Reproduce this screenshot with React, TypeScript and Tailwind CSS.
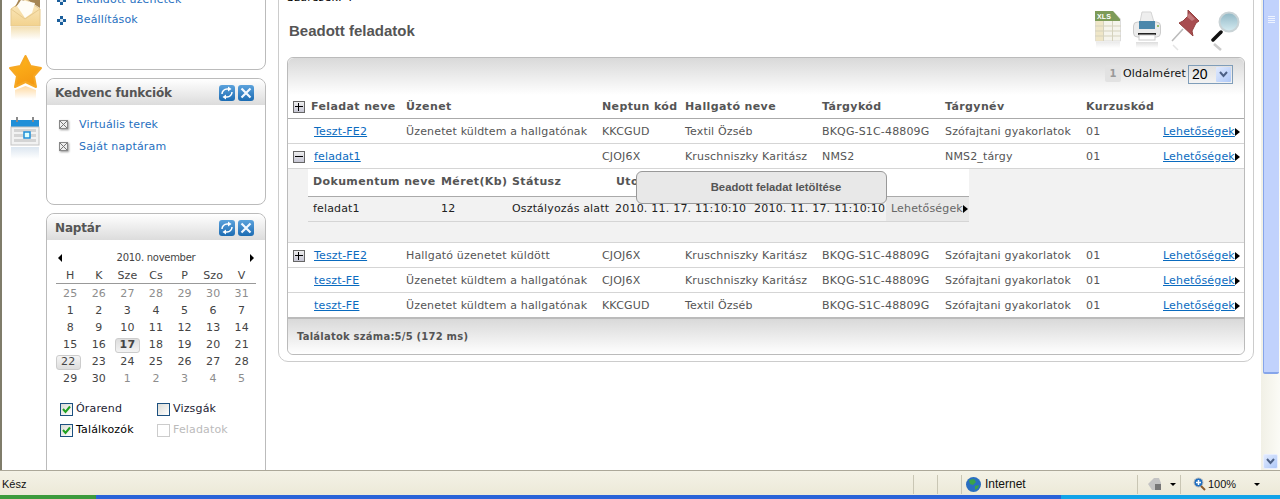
import type { ReactNode } from 'react'

const GRID = 'grid grid-cols-[23px_95px_196px_83px_137px_123px_141px_77px_83px] items-center'
const SUB_GRID = 'grid grid-cols-[128px_71px_104px_139px_131px_83px] items-center'

const rows = [
  { name: 'Teszt-FE2', msg: 'Üzenetet küldtem a hallgatónak', code: 'KKCGUD', student: 'Textil Özséb', subj: 'BKQG-S1C-48809G', subjName: 'Szófajtani gyakorlatok' },
  { name: 'feladat1', msg: '', code: 'CJOJ6X', student: 'Kruschniszky Karitász', subj: 'NMS2', subjName: 'NMS2_tárgy', toggle: 'minus' },
  { name: 'Teszt-FE2', msg: 'Hallgató üzenetet küldött', code: 'CJOJ6X', student: 'Kruschniszky Karitász', subj: 'BKQG-S1C-48809G', subjName: 'Szófajtani gyakorlatok', toggle: 'plus' },
  { name: 'teszt-FE', msg: 'Üzenetet küldtem a hallgatónak', code: 'CJOJ6X', student: 'Kruschniszky Karitász', subj: 'BKQG-S1C-48809G', subjName: 'Szófajtani gyakorlatok' },
  { name: 'teszt-FE', msg: 'Üzenetet küldtem a hallgatónak', code: 'KKCGUD', student: 'Textil Özséb', subj: 'BKQG-S1C-48809G', subjName: 'Szófajtani gyakorlatok' },
]

const weeks = [
  ['25', '26', '27', '28', '29', '30', '31'],
  ['1', '2', '3', '4', '5', '6', '7'],
  ['8', '9', '10', '11', '12', '13', '14'],
  ['15', '16', '17', '18', '19', '20', '21'],
  ['22', '23', '24', '25', '26', '27', '28'],
  ['29', '30', '1', '2', '3', '4', '5'],
]

function Toggle({ kind, className = '' }: { kind: 'plus' | 'minus'; className?: string }) {
  return (
    <span className={`relative ml-[5px] block h-[12px] w-[12px] border border-[#666] bg-gradient-to-b from-[#eee] to-[#c6c6d4] ${className}`}>
      <span className="absolute left-[1px] top-[4px] h-px w-[8px] bg-black" />
      {kind === 'plus' && <span className="absolute left-[4px] top-[1px] h-[8px] w-px bg-black" />}
    </span>
  )
}

function Arrow() {
  return <span className="absolute right-[-5px] top-[4px] h-0 w-0 border-y-[4px] border-l-[5px] border-y-transparent border-l-black" />
}

function Chevron() {
  return <svg width="9" height="7" viewBox="0 0 9 7"><path d="M1 1 L4.5 5 L8 1" stroke="#4d6185" strokeWidth="2" fill="none" /></svg>
}

function HeaderButtons() {
  return (
    <div className="flex gap-[3px]">
      <span className="flex h-[16px] w-[16px] items-center justify-center rounded-[3px] bg-gradient-to-b from-[#5ba2dc] to-[#1a6cb3]">
        <svg width="14" height="14" viewBox="0 0 14 14">
          <path d="M2 8 A5 5 0 0 1 7 3 L8 3" stroke="#fff" strokeWidth="1.5" fill="none" />
          <path d="M8 0.5 L11.5 3 L8 5.5 Z" fill="#fff" />
          <path d="M12 6 A5 5 0 0 1 7 11 L6 11" stroke="#fff" strokeWidth="1.5" fill="none" />
          <path d="M6 8.5 L2.5 11 L6 13.5 Z" fill="#fff" />
        </svg>
      </span>
      <span className="flex h-[16px] w-[16px] items-center justify-center rounded-[3px] bg-gradient-to-b from-[#5ba2dc] to-[#1a6cb3]">
        <svg width="12" height="12" viewBox="0 0 12 12"><path d="M1.5 1.5 L10.5 10.5 M10.5 1.5 L1.5 10.5" stroke="#f2f8ff" strokeWidth="2.2" /></svg>
      </span>
    </div>
  )
}

function SidePanel({ title, className, children }: { title: string; className: string; children: ReactNode }) {
  return (
    <div className={`rounded-[8px] border border-[#bbb] ${className}`}>
      <div className="flex h-[26px] items-center justify-between rounded-t-[8px] bg-gradient-to-b from-white to-[#dcdcdc] pl-[8px] pr-[11px] pt-[1px]">
        <span className="text-[12px] font-bold tracking-[-0.15px] text-[#555]">{title}</span>
        <HeaderButtons />
      </div>
      {children}
    </div>
  )
}

function Diamond() {
  return (
    <svg width="9" height="9" viewBox="0 0 9 9" shapeRendering="crispEdges">
      <path d="M3 0 H6 V3 H3 Z M0 3 H3 V6 H0 Z M6 3 H9 V6 H6 Z M3 6 H6 V9 H3 Z" fill="#1b5f9c" />
      <path d="M3 3 H6 V6 H3 Z" fill="#cfe0ef" />
    </svg>
  )
}

function FavLink({ label }: { label: string }) {
  return (
    <div className="flex h-[22px] items-center">
      <span className="relative ml-[12px] mt-[-2px] block h-[9px] w-[9px] border border-[#888] bg-[#eee] shadow-[1px_1px_2px_#999]">
        <svg className="absolute inset-0" width="7" height="7" viewBox="0 0 7 7"><path d="M0 0 L7 7 M7 0 L0 7" stroke="#777" strokeWidth="1" /></svg>
      </span>
      <span className="ml-[11px] text-[11px] text-[#1f6fc0]">{label}</span>
    </div>
  )
}

function CheckItem({ label, checked, dim, bold }: { label: string; checked?: boolean; dim?: boolean; bold?: boolean }) {
  return (
    <div className="flex h-[21px] items-center gap-[3px]">
      <span className={`relative block h-[13px] w-[13px] border ${dim ? 'border-[#ccc] bg-white' : 'border-[#1c5180] bg-gradient-to-br from-[#dcdcd6] to-white'}`}>
        {checked && (
          <svg className="absolute inset-0" width="11" height="11" viewBox="0 0 11 11"><path d="M2 5 L4.5 8 L9 2.5" stroke="#21a121" strokeWidth="2" fill="none" /></svg>
        )}
      </span>
      <span className={`text-[11px] ${dim ? 'text-[#bbb]' : bold ? 'text-black' : 'text-[#223]'}`}>{label}</span>
    </div>
  )
}

function Calendar() {
  return (
    <div className="px-[9px] pt-[10px]">
      <div className="flex items-center justify-between px-[2px] text-[10px] tracking-[-0.28px] text-[#444]">
        <span className="h-0 w-0 border-y-[4px] border-r-[4px] border-y-transparent border-r-black" />
        <span>2010. november</span>
        <span className="h-0 w-0 border-y-[4px] border-l-[4px] border-y-transparent border-l-black" />
      </div>
      <div className="grid h-[19px] grid-cols-7 items-center border-b border-[#999] pt-[3px] text-center text-[11px] text-[#444]">
        {['H', 'K', 'Sze', 'Cs', 'P', 'Szo', 'V'].map((d) => (
          <span key={d}>{d}</span>
        ))}
      </div>
      <div className="grid grid-cols-7 pt-[2px] text-center text-[11px]">
        {weeks.flat().map((d, i) => {
          const other = i < 7 || i > 36
          const today = i === 23
          const picked = i === 28
          return (
            <span
              key={i}
              className={`flex items-center justify-center ${today || picked ? 'my-[1px] h-[15px] rounded-[3px] border border-[#ccc]' : 'h-[17px]'} ${other ? 'text-[#8d8d8d]' : 'text-[#444]'} ${today ? 'mx-[2px] bg-gradient-to-b from-[#ddd] to-[#f3f3f3] font-bold text-[#222]' : ''} ${picked ? 'mr-[4px] bg-gradient-to-b from-[#f5f5f5] to-[#ddd]' : ''}`}
            >
              {d}
            </span>
          )
        })}
      </div>
      <div className="mt-[11px] grid grid-cols-[97px_1fr] pl-[4px]">
        <CheckItem label="Órarend" checked />
        <CheckItem label="Vizsgák" />
        <CheckItem label="Találkozók" checked bold />
        <CheckItem label="Feladatok" dim />
      </div>
    </div>
  )
}

function Rail() {
  return (
    <div className="w-[44px] shrink-0 pl-[8px]">
      {/* boríték */}
      <svg className="mt-[-1px] block" width="34" height="42" viewBox="0 0 34 42">
        <defs>
          <linearGradient id="env" x1="0" y1="0" x2="0" y2="1"><stop offset="0" stopColor="#fcecc6" /><stop offset="1" stopColor="#f2d28e" /></linearGradient>
          <linearGradient id="envr" x1="0" y1="0" x2="0" y2="1"><stop offset="0" stopColor="#f3e0b4" /><stop offset="1" stopColor="#fff" /></linearGradient>
        </defs>
        <path d="M1 10 L15 0 L30 10 L30 27 L1 27 Z" fill="url(#env)" stroke="#e6c98d" />
        <path d="M5 8 L9 0 L30 0 L30 9 L16 0 Z" fill="#a58553" />
        <path d="M7 7 L11 1 L25 4 L22 14 L15 19 Z" fill="#fffdf6" />
        <path d="M1 10 L15 20 L30 10" fill="none" stroke="#e6c98d" />
        <rect x="1" y="28" width="29" height="13" fill="url(#envr)" />
      </svg>
      {/* csillag */}
      <svg className="ml-[-2px] mt-[13px] block" width="36" height="46" viewBox="0 0 36 46">
        <defs>
          <linearGradient id="star" x1="0" y1="0" x2="0.4" y2="1"><stop offset="0" stopColor="#ffb81c" /><stop offset="1" stopColor="#f59a12" /></linearGradient>
          <linearGradient id="starr" x1="0" y1="0" x2="0" y2="1"><stop offset="0" stopColor="#ffd9a0" /><stop offset="1" stopColor="#fff" /></linearGradient>
        </defs>
        <path d="M17.5 2 L22.5 12 L33 14 L26 22 L28 33 L17.5 28 L7 33 L9 22 L2 14 L12.5 12 Z" fill="url(#star)" stroke="#f7a823" strokeWidth="2" strokeLinejoin="round" />
        <path d="M7 36 L17.5 32 L28 36 L28 45 L7 45 Z" fill="url(#starr)" />
      </svg>
      {/* naptár */}
      <svg className="mt-[17px] block" width="32" height="44" viewBox="0 0 32 44">
        <defs><linearGradient id="calr" x1="0" y1="0" x2="0" y2="1"><stop offset="0" stopColor="#dce6f0" /><stop offset="1" stopColor="#fff" /></linearGradient></defs>
        <rect x="1" y="3" width="28" height="7" fill="#1f8fd8" />
        <rect x="1" y="10" width="28" height="18" fill="#f2f2f2" stroke="#c4c4c4" />
        <rect x="6" y="0" width="2" height="5" fill="#8a8a8a" />
        <rect x="22" y="0" width="2" height="5" fill="#8a8a8a" />
        <g fill="#d4d4d4">
          <rect x="4" y="12" width="22" height="3" /><rect x="4" y="17" width="22" height="3" /><rect x="4" y="22" width="22" height="3" />
        </g>
        <rect x="14" y="15" width="6" height="6" fill="#dff" stroke="#1f8fd8" strokeWidth="1.5" />
        <rect x="1" y="30" width="28" height="12" fill="url(#calr)" />
      </svg>
    </div>
  )
}

function TopIcons() {
  return (
    <div className="flex items-start pr-[5px]">
      <svg width="26" height="38" viewBox="0 0 26 38">
        <defs><linearGradient id="fade" x1="0" y1="0" x2="0" y2="1"><stop offset="0" stopColor="#ddd" /><stop offset="1" stopColor="#fff" /></linearGradient></defs>
        <path d="M0.5 0.5 L18 0.5 L25.5 8 L25.5 30 L0.5 30 Z" fill="#f5f4ec" stroke="#ddd" />
        <path d="M0 0 L18 0 L25 8 L25 10 L0 10 Z" fill="#7d9b58" />
        <text x="2" y="8" fontSize="7" fontWeight="700" fill="#fff" fontFamily="Liberation Sans, sans-serif">XLS</text>
        <rect x="0.5" y="10" width="8" height="20" fill="#ecdfb8" opacity="0.7" />
        <path d="M0 15 H26 M0 20 H26 M0 25 H26 M8.5 10 V30 M17.5 10 V30" stroke="#d5d2bd" />
        <rect x="1" y="31" width="24" height="6" fill="url(#fade)" opacity="0.6" />
      </svg>
      <svg className="ml-[12px]" width="28" height="38" viewBox="0 0 28 38">
        <path d="M9 1 L18 1 L21 11 L7 11 Z" fill="#eee" stroke="#d5d5d5" />
        <rect x="0.5" y="11" width="27" height="15" rx="4" fill="#ececec" stroke="#ccc" />
        <rect x="6" y="10" width="16" height="8" fill="#4b87ab" />
        <rect x="5" y="22" width="18" height="2" fill="#222" />
        <rect x="6" y="24" width="16" height="5" fill="#fff" stroke="#ccc" />
        <rect x="24" y="14" width="2" height="2" fill="#9bbf6a" />
        <rect x="3" y="31" width="22" height="6" fill="url(#fade)" />
      </svg>
      <svg className="ml-[10px] mt-[-2px]" width="30" height="42" viewBox="0 0 30 42">
        <path d="M1 32 L12 20" stroke="#bbb" strokeWidth="1.6" />
        <path d="M17 1 L28 12 L25 14 L21 22 L22 27 L8 14 L12 12 L17 7 Z" fill="#a84d50" stroke="#93403f" strokeLinejoin="round" />
        <path d="M18 4 L24 10 L21 12 L16 8 Z" fill="#c47a7c" />
        <path d="M2 36 L7 41" stroke="#e4e4e4" strokeWidth="1.5" />
      </svg>
      <svg className="ml-[10px]" width="29" height="40" viewBox="0 0 29 40">
        <defs><linearGradient id="lens" x1="0" y1="0" x2="0" y2="1"><stop offset="0" stopColor="#8fb6c4" /><stop offset="1" stopColor="#d6ecf2" /></linearGradient></defs>
        <path d="M2 29 L10 21" stroke="#111" strokeWidth="3.5" strokeLinecap="round" />
        <circle cx="18" cy="11" r="9.5" fill="url(#lens)" stroke="#c9d3d6" strokeWidth="2" />
        <path d="M3 33 L10 39" stroke="#ccc" strokeWidth="2.5" />
      </svg>
    </div>
  )
}

function Row({ r, last }: { r: (typeof rows)[number]; last?: boolean }) {
  return (
    <div className={`${GRID} ${last ? 'h-[24px]' : 'h-[25px] border-b border-[#d5d5d5]'} pt-[2px] text-[#555]`}>
      <span>{r.toggle && <Toggle kind={r.toggle as 'plus' | 'minus'} />}</span>
      <a className="pl-[3px] text-[#0a6bbf] underline">{r.name}</a>
      <span>{r.msg}</span>
      <span>{r.code}</span>
      <span>{r.student}</span>
      <span>{r.subj}</span>
      <span>{r.subjName}</span>
      <span>01</span>
      <span className="relative w-fit whitespace-nowrap text-[#0a6bbf] underline">
        Lehetőségek
        <Arrow />
      </span>
    </div>
  )
}

export default function App() {
  return (
    <div className="flex h-[499px] w-[1280px] flex-col overflow-hidden bg-white font-['DejaVu_Sans',sans-serif] text-[11px] tracking-[0.16px]">
      <div className="flex h-[470px] shrink-0 overflow-hidden border-l-2 border-[#7f7c6a]">
        <Rail />

        {/* oldalsáv */}
        <div className="mt-[-60px] w-[220px] shrink-0">
          <div className="h-[130px] rounded-[8px] border border-[#bbb] pl-[10px] pt-[49px] text-[11px] text-[#1f6fc0]">
            <div className="flex h-[20px] items-center gap-[10px]"><Diamond /><span>Elküldött üzenetek</span></div>
            <div className="flex h-[20px] items-center gap-[10px]"><Diamond /><span>Beállítások</span></div>
          </div>
          <SidePanel title="Kedvenc funkciók" className="mt-[8px] h-[127px]">
            <div className="pt-[9px]">
              <FavLink label="Virtuális terek" />
              <FavLink label="Saját naptáram" />
            </div>
          </SidePanel>
          <SidePanel title="Naptár" className="mt-[8px] h-[320px]">
            <Calendar />
          </SidePanel>
        </div>

        {/* tartalom */}
        <div className="ml-[12px] mt-[-30px] h-[392px] w-[976px] shrink-0 rounded-[10px] border border-[#ccc] px-[8px]">
          <div className="flex h-[86px] items-start justify-between">
            <div className="pt-[20px]">
              <div className="text-[11px] leading-[14px] text-black">Szűrések: 4</div>
              <div className="mt-[15px] pl-[2px] font-['Liberation_Sans',sans-serif] text-[15px] font-bold tracking-normal text-[#555]">Beadott feladatok</div>
            </div>
            <div className="pt-[40px]"><TopIcons /></div>
          </div>

          <div className="h-[298px] w-[958px] rounded-[6px] border border-[#bbb]">
            <div className="flex h-[37px] items-start justify-end rounded-t-[6px] bg-gradient-to-b from-[#d9d9d9] to-white pr-[11px] pt-[7px]">
              <span className="mr-[2px] flex h-[17px] w-[16px] items-center justify-center rounded-[2px] bg-[#e2e2e2] text-[10px] font-bold text-[#999]">1</span>
              <span className="mt-[1px] text-[#111]">Oldalméret</span>
              <span className="ml-[2px] flex h-[19px] w-[45px] items-center justify-between border border-[#7f9db9] pl-[3px] pr-[1px] font-['Liberation_Sans',sans-serif] text-[14px] tracking-normal text-black">
                20
                <span className="flex h-[15px] w-[15px] items-center justify-center rounded-[1px] bg-gradient-to-br from-[#e1eafe] to-[#aec8f7]">
                  <Chevron />
                </span>
              </span>
            </div>

            <div className={`${GRID} h-[24px] border-b border-[#aaa] pt-[2px] font-bold tracking-[0.38px] text-[#555]`}>
              <Toggle kind="plus" className="mt-[-2px]" />
              <span>Feladat neve</span><span>Üzenet</span><span>Neptun kód</span><span>Hallgató neve</span><span>Tárgykód</span><span>Tárgynév</span><span>Kurzuskód</span><span />
            </div>

            <Row r={rows[0]} />
            <Row r={rows[1]} />

            {/* részletek */}
            <div className="relative h-[74px] border-b border-[#d5d5d5] bg-[#f2f2f2] pl-[20px]">
              <div className="w-[661px]">
                <div className={`${SUB_GRID} h-[28px] border-b border-[#aaa] bg-white pl-[5px] font-bold tracking-[0.38px] text-[#555]`}>
                  <span className="whitespace-nowrap">Dokumentum neve</span><span>Méret(Kb)</span><span>Státusz</span><span className="whitespace-nowrap">Utolsó módosítás</span><span /><span />
                </div>
                <div className={`${SUB_GRID} h-[25px] border-b border-[#d5d5d5] pl-[5px] text-[#222]`}>
                  <span>feladat1</span><span>12</span><span className="whitespace-nowrap">Osztályozás alatt</span><span className="ml-[-1px] whitespace-nowrap tracking-[0.22px]">2010. 11. 17. 11:10:10</span><span className="ml-[-1px] whitespace-nowrap tracking-[0.22px]">2010. 11. 17. 11:10:10</span>
                  <span className="relative flex h-full items-center bg-[#e8e8e8] pl-[5px] text-[#666]">
                    Lehetőségek
                    <span className="absolute right-[1px] top-[8px] h-0 w-0 border-y-[4px] border-l-[5px] border-y-transparent border-l-black" />
                  </span>
                </div>
              </div>
              <div className="absolute left-[348px] top-[2px] flex h-[33px] w-[251px] items-center justify-center rounded-[6px] border border-[#999] bg-[#e8e8e8] pb-[1px] pl-[29px] font-['Liberation_Sans',sans-serif] text-[11.3px] font-bold tracking-normal text-[#555]">
                Beadott feladat letöltése
              </div>
            </div>

            <Row r={rows[2]} />
            <Row r={rows[3]} />
            <Row r={rows[4]} last />

            <div className="flex h-[37px] items-center rounded-b-[6px] border-t-2 border-[#bbb] bg-gradient-to-b from-[#d9d9d9] to-white pl-[9px] text-[10px] font-bold tracking-[0.22px] text-[#555]">
              Találatok száma:5/5 (172 ms)
            </div>
          </div>
        </div>

        {/* görgetősáv */}
        <div className="ml-[7px] flex w-[19px] shrink-0 flex-col bg-gradient-to-r from-[#f1f0e6] to-[#fbfbf6] pl-[2px]">
          <div className="flex h-[374px] w-[16px] flex-col items-center gap-[1px] rounded-b-[2px] border-b-2 border-l border-[#86a5ea] bg-[#c1d2fc] pt-[16px]">
            <span className="h-px w-[7px] bg-[#eef3ff]" />
            <span className="h-px w-[7px] bg-[#eef3ff]" />
            <span className="h-px w-[7px] bg-[#eef3ff]" />
            <span className="h-px w-[7px] bg-[#eef3ff]" />
          </div>
          <div className="flex-1" />
          <div className="mb-[1px] flex h-[15px] w-[15px] items-center justify-center rounded-[2px] border border-[#e8eeff] bg-gradient-to-br from-[#e1eafe] to-[#aec8f7]">
            <Chevron />
          </div>
        </div>
      </div>

      {/* állapotsor */}
      <div className="flex h-[25px] shrink-0 items-center border-t border-[#aca899] bg-gradient-to-b from-[#f4f2e6] to-[#ece9d8] pt-[2px] font-['Liberation_Sans',sans-serif] text-[12px] tracking-normal text-[#111]">
        <span className="w-[913px] pl-[2px] text-[11px]">Kész</span>
        <span className="h-[19px] w-[24px] border-l border-[#c9c6b4]" />
        <span className="h-[19px] w-[24px] border-l border-[#c9c6b4]" />
        <span className="flex h-[19px] w-[176px] items-center gap-[4px] border-l border-[#c9c6b4] pl-[4px]">
          <svg width="15" height="15" viewBox="0 0 15 15"><circle cx="7.5" cy="7.5" r="7.5" fill="#2a6fc0" /><path d="M3 3 L8 2 L10 5 L7 8 L4 7 Z M9 9 L13 8 L12 11 L9 13 Z" fill="#3aa34a" /></svg>
          Internet
        </span>
        <span className="flex h-[19px] w-[43px] items-center border-l border-[#c9c6b4] pl-[9px]">
          <svg width="16" height="14" viewBox="0 0 16 14"><path d="M1 7 L7 1 L12 1 L14 6 L14 13 L5 13 Z" fill="#c4c4c4" /><rect x="8" y="7" width="6" height="6" fill="#777" /></svg>
          <span className="ml-[7px] h-0 w-0 border-x-[3px] border-t-[3px] border-x-transparent border-t-black" />
        </span>
        <span className="flex h-[19px] flex-1 items-center gap-[2px] border-l border-[#c9c6b4] pl-[12px]">
          <svg width="13" height="14" viewBox="0 0 13 14"><circle cx="5.5" cy="5.5" r="4.5" fill="#1f6fc0" stroke="#bbb" /><path d="M3 5.5 H8 M5.5 3 V8" stroke="#fff" strokeWidth="1.5" /><path d="M8 9 L12 13" stroke="#8a5a2a" strokeWidth="2" /></svg>
          <span className="text-[11px]">100%</span>
          <span className="ml-[16px] h-0 w-0 border-x-[3px] border-t-[3px] border-x-transparent border-t-black" />
        </span>
      </div>

      {/* tálca */}
      <div className="flex h-[4px] shrink-0">
        <div className="w-[96px] bg-[#3c9a3c]" />
        <div className="w-[965px] bg-[#2a63d8]" />
        <div className="flex-1 bg-[#12a3e8]" />
      </div>
    </div>
  )
}
